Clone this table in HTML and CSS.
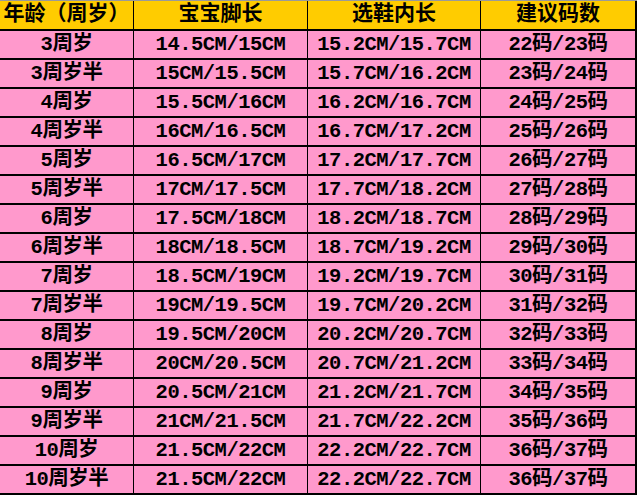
FILE: index.html
```html
<!DOCTYPE html>
<html lang="zh">
<head>
<meta charset="utf-8">
<link rel="stylesheet" href="styles.css">
</head>
<body>
<table class="sheet">
<colgroup><col class="c1"><col class="c2"><col class="c3"><col class="c4"></colgroup>
<thead>
<tr class="head"><td>年龄（周岁）</td><td>宝宝脚长</td><td>选鞋内长</td><td>建议码数</td></tr>
</thead>
<tbody>
<tr><td>3周岁</td><td>14.5CM/15CM</td><td>15.2CM/15.7CM</td><td>22码/23码</td></tr>
<tr><td>3周岁半</td><td>15CM/15.5CM</td><td>15.7CM/16.2CM</td><td>23码/24码</td></tr>
<tr><td>4周岁</td><td>15.5CM/16CM</td><td>16.2CM/16.7CM</td><td>24码/25码</td></tr>
<tr><td>4周岁半</td><td>16CM/16.5CM</td><td>16.7CM/17.2CM</td><td>25码/26码</td></tr>
<tr><td>5周岁</td><td>16.5CM/17CM</td><td>17.2CM/17.7CM</td><td>26码/27码</td></tr>
<tr><td>5周岁半</td><td>17CM/17.5CM</td><td>17.7CM/18.2CM</td><td>27码/28码</td></tr>
<tr><td>6周岁</td><td>17.5CM/18CM</td><td>18.2CM/18.7CM</td><td>28码/29码</td></tr>
<tr><td>6周岁半</td><td>18CM/18.5CM</td><td>18.7CM/19.2CM</td><td>29码/30码</td></tr>
<tr><td>7周岁</td><td>18.5CM/19CM</td><td>19.2CM/19.7CM</td><td>30码/31码</td></tr>
<tr><td>7周岁半</td><td>19CM/19.5CM</td><td>19.7CM/20.2CM</td><td>31码/32码</td></tr>
<tr><td>8周岁</td><td>19.5CM/20CM</td><td>20.2CM/20.7CM</td><td>32码/33码</td></tr>
<tr><td>8周岁半</td><td>20CM/20.5CM</td><td>20.7CM/21.2CM</td><td>33码/34码</td></tr>
<tr><td>9周岁</td><td>20.5CM/21CM</td><td>21.2CM/21.7CM</td><td>34码/35码</td></tr>
<tr><td>9周岁半</td><td>21CM/21.5CM</td><td>21.7CM/22.2CM</td><td>35码/36码</td></tr>
<tr><td>10周岁</td><td>21.5CM/22CM</td><td>22.2CM/22.7CM</td><td>36码/37码</td></tr>
<tr><td>10周岁半</td><td>21.5CM/22CM</td><td>22.2CM/22.7CM</td><td>36码/37码</td></tr>
</tbody>
</table>
</body>
</html>
```
FILE: styles.css
```css
html, body {
  margin: 0;
  padding: 0;
  background: #ffffff;
}
.sheet {
  border-collapse: separate;
  border-spacing: 0;
  table-layout: fixed;
  width: 637px;
  border-top: 1px solid #9a9a9a;
  font-family: "Liberation Mono", "Noto Sans CJK SC", monospace;
  font-size: 20.5px;
  letter-spacing: -0.5px;
  font-weight: bold;
  color: #000;
}
.c1 { width: 134px; }
.c2 { width: 174px; }
.c3 { width: 173px; }
.c4 { width: 156px; }
.sheet td {
  height: 27px;
  padding: 0;
  text-align: center;
  vertical-align: middle;
  white-space: nowrap;
  overflow: visible;
  background: #ff99cc;
  border-right: 1px solid #000;
  border-bottom: 2px solid #000;
  line-height: 27px;
}
.sheet td:last-child {
  border-right: 2px solid #000;
}
.head td {
  background: #ffcc00;
  height: 28px;
  line-height: 28px;
  font-size: 21px;
  letter-spacing: 0;
}
```
